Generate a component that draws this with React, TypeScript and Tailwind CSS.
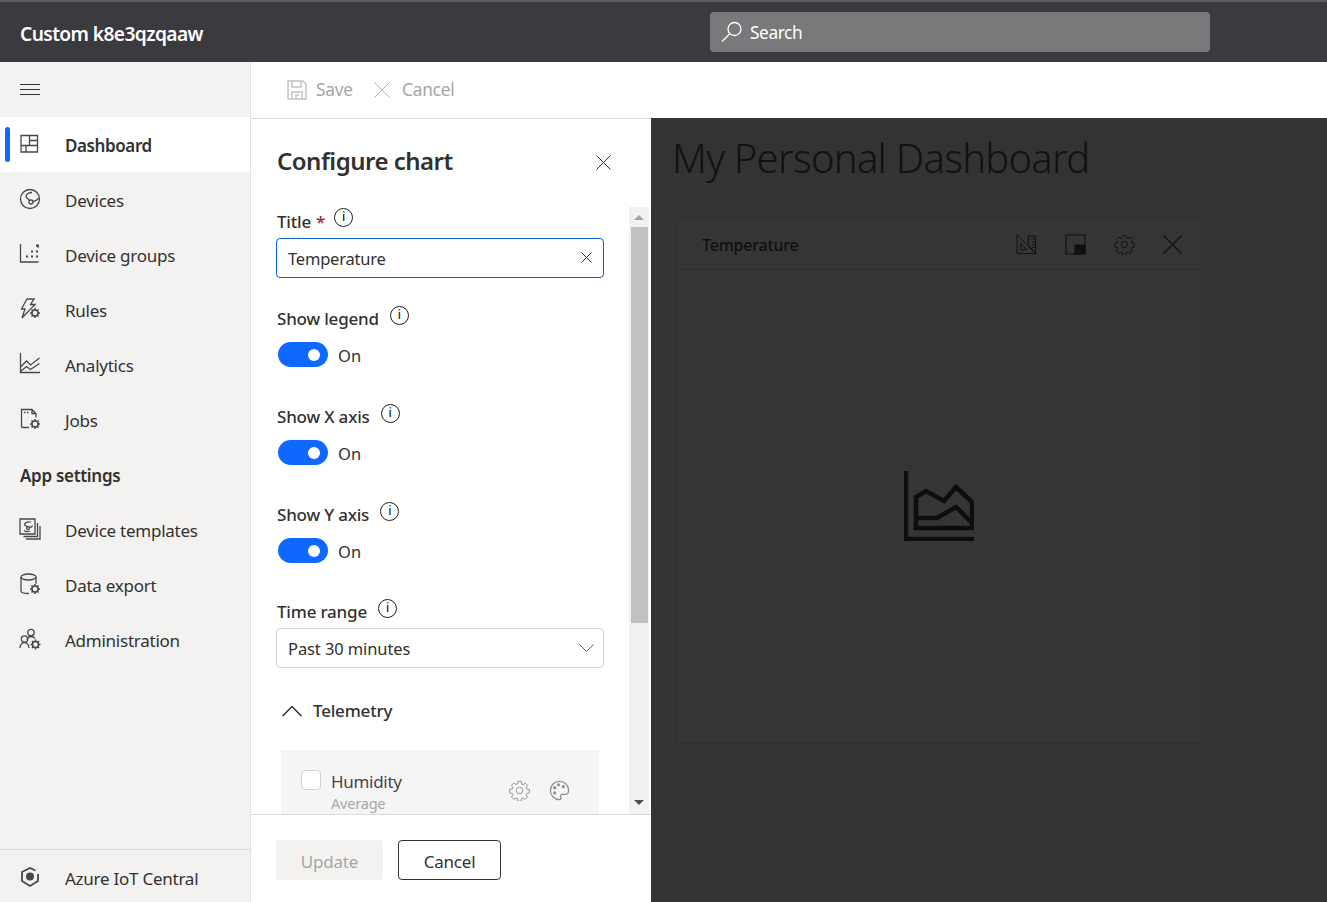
import type { ReactNode } from 'react';

const font = { fontFamily: '"Noto Sans", "Open Sans", sans-serif' };

function Icon({ size = 22, children, className = '' }: { size?: number; children: ReactNode; className?: string }) {
  return (
    <svg
      width={size}
      height={size}
      viewBox="0 0 22 22"
      fill="none"
      stroke="currentColor"
      strokeWidth="1.300"
      className={`shrink-0 ${className}`}
    >
      {children}
    </svg>
  );
}

function Cross({ size, width = 1, className = '' }: { size: number; width?: number; className?: string }) {
  return (
    <svg width={size} height={size} viewBox={`0 0 ${size} ${size}`} stroke="currentColor" strokeWidth={width} className={`shrink-0 ${className}`}>
      <path d={`M.5 .5 ${size - 0.5} ${size - 0.5}M${size - 0.5} .5 .5 ${size - 0.5}`} />
    </svg>
  );
}

// little gear that sits on the corner of the nav icons
function SmallGear({ cx, cy }: { cx: number; cy: number }) {
  return (
    <g>
      <circle cx={cx} cy={cy} r="5.500" fill="#f3f2f1" stroke="none" />
      <circle cx={cx} cy={cy} r="3" strokeWidth="1.500" />
      <path
        d={`M${cx} ${cy - 5}v2M${cx} ${cy + 3}v2M${cx - 5} ${cy}h2M${cx + 3} ${cy}h2M${cx - 3.500} ${cy - 3.500}l1.400 1.400M${cx + 2.100} ${cy + 2.100}l1.400 1.400M${cx + 3.500} ${cy - 3.500}l-1.400 1.400M${cx - 2.100} ${cy + 2.100}l-1.400 1.400`}
        strokeWidth="1.600"
      />
    </g>
  );
}

function Gear({ size = 22, className = '' }: { size?: number; className?: string }) {
  return (
    <Icon size={size} className={className}>
      <g strokeWidth="1">
        <path d="M9.300 1.500h3.400l.5 2.700 1.500.7 2.300-1.500 2.400 2.400-1.500 2.300.7 1.500 2.700.5v3.400l-2.700.5-.7 1.500 1.500 2.300-2.400 2.400-2.300-1.500-1.500.7-.5 2.700H9.300l-.5-2.700-1.500-.7-2.300 1.500-2.400-2.400 1.500-2.300-.7-1.500-2.700-.5V9.900l2.700-.5.7-1.500L2.600 5.600 5 3.200l2.300 1.500 1.500-.7z" />
        <circle cx="11" cy="11" r="3.400" />
      </g>
    </Icon>
  );
}

const icons: Record<string, ReactNode> = {
  Dashboard: <path d="M2 2.500h16.500v16.500H2zM10.500 2.500v10M2 12.500h16.500M10.500 7.500h8M7 12.500V19" />,
  Devices: (
    <>
      <circle cx="11" cy="11" r="9.500" />
      <circle cx="12" cy="14" r="2" />
      <path d="M10.500 12.500 7 9c0-3 3-4.500 6-4.500M14 13.500c2 0 4-1 5.500-3.500" />
    </>
  ),
  'Device groups': (
    <>
      <path d="M1.500 1v18h18" />
      <path d="M17 2.500h2v2M12 8.500h2M17 8.500h2M7 13.500h2M12 13.500h2M17 13.500h2" strokeWidth="2" />
    </>
  ),
  Rules: (
    <>
      <path d="M8 1h7l-3.500 5.500H16L3 20l3-9H2.500z" />
      <SmallGear cx={16} cy={15} />
    </>
  ),
  Analytics: <path d="M1.500 0v19.500H21M1.500 14l6-6 4 4 9-7M1.500 18.500l6-5 4 3 9-6" />,
  Jobs: (
    <>
      <path d="M2.500 19.500V1.500H13l4 4v4M2.500 19.500H10M13 1.500v4h4M5 4.500h1.500M8 4.500h1.500" />
      <SmallGear cx={16} cy={16} />
    </>
  ),
  'Device templates': (
    <>
      <path d="M1 1h15v15H1zM18.500 5v13.500h-14M21 8v13H7" />
      <circle cx="9" cy="10" r="1.500" />
      <path d="M8 8.500 5.500 7c0-2 2-3.500 6-3M10.500 9.500c1.500 0 2.500-.5 3-2M5 12.500c2 1.500 4 1.500 6 .5" />
    </>
  ),
  'Data export': (
    <>
      <ellipse cx="9.500" cy="4" rx="7.500" ry="3" />
      <path d="M2 4v14c0 1.500 3 2.500 8 2.500M17 4v7" />
      <SmallGear cx={16} cy={16} />
    </>
  ),
  Administration: (
    <>
      <circle cx="12" cy="4.500" r="3.200" />
      <path d="M8 12c.5-2 2-3.500 4-3.500s3 .5 4 2" />
      <circle cx="5.500" cy="11" r="3.200" />
      <path d="M1 20c0-3 2-5.500 4.500-5.500S10 17 10 20" />
      <SmallGear cx={16.500} cy={16.500} />
    </>
  ),
  'Azure IoT Central': (
    <>
      <path d="M16.500 4.500 11 2 3 6v9l8 5 8-5V8" strokeWidth="1.800" />
      <circle cx="11" cy="10.500" r="4" fill="currentColor" stroke="none" />
    </>
  ),
};

function NavRow({ label, active = false }: { label: string; active?: boolean }) {
  return (
    <div className={`relative flex h-[55px] items-center pl-[19px] ${active ? 'bg-white' : ''}`}>
      {active && <div className="absolute left-[5px] top-[10px] h-[35px] w-[5px] rounded-full bg-[#0f68ff]" />}
      <Icon className="-mt-[2px] text-[#484848]">{icons[label]}</Icon>
      <span className={`ml-[24px] mt-[2px] text-[17px] text-[#323130] ${active ? 'font-semibold tracking-[-0.4px]' : 'tracking-[-0.25px]'}`}>{label}</span>
    </div>
  );
}

function Info({ raised = false }: { raised?: boolean }) {
  return (
    <span
      className={`flex h-[19px] w-[19px] items-center justify-center rounded-full border border-[#201f1e] pb-px text-[12px] leading-none text-[#201f1e] ${
        raised ? 'ml-[9px] -mt-[9px]' : 'ml-[11px] -mt-[7px]'
      }`}
    >
      i
    </span>
  );
}

function Toggle() {
  return (
    <div className="mt-[10px] flex h-[25px] items-center">
      <div className="ml-[2px] flex h-[25px] w-[50px] items-center justify-end rounded-full bg-[#0f68ff] pr-[8px]">
        <div className="h-[12px] w-[12px] rounded-full bg-white" />
      </div>
      <span className="ml-[10px] h-[25px] text-[16.500px] leading-[28px] text-[#323130]">On</span>
    </div>
  );
}

function FieldLabel({ children }: { children: ReactNode }) {
  return (
    <div className="flex h-[27px] items-center pl-px text-[17px] font-medium tracking-[-0.2px] text-[#323130]">
      {children}
      <Info />
    </div>
  );
}

export default function App() {
  return (
    <div style={font} className="flex h-[902px] w-[1327px] flex-col overflow-hidden bg-white">
      <header className="flex h-[62px] shrink-0 items-center border-t-2 border-[#5c5c5c] bg-[#3b3a3f]">
        <div className="mt-[4px] w-[710px] pl-5 text-[19.200px] font-semibold tracking-[-0.6px] text-white">Custom k8e3qzqaaw</div>
        <div className="flex h-10 w-[500px] items-center rounded-sm bg-[#79797b] pl-[11px] text-white">
          <svg width="22" height="22" viewBox="0 0 22 22" fill="none" stroke="currentColor" strokeWidth="1.300">
            <circle cx="13.500" cy="8" r="6.500" />
            <path d="M8.800 12.700 1 20.500" />
          </svg>
          <span className="ml-[7px] mt-[2px] text-[17.300px] tracking-[-0.4px]">Search</span>
        </div>
      </header>

      <div className="flex min-h-0 flex-1">
        <aside className="flex w-[251px] shrink-0 flex-col border-r border-[#e3e2e1] bg-[#f3f2f1]">
          <div className="flex h-[55px] items-center pl-5">
            <svg width="20" height="12" viewBox="0 0 20 12" stroke="#323130" strokeWidth="1">
              <path d="M0 .5h20M0 5.500h20M0 10.500h20" />
            </svg>
          </div>
          <NavRow label="Dashboard" active />
          <NavRow label="Devices" />
          <NavRow label="Device groups" />
          <NavRow label="Rules" />
          <NavRow label="Analytics" />
          <NavRow label="Jobs" />
          <div className="flex h-[55px] items-center pl-5 pt-[2px] text-[17px] font-semibold tracking-[-0.3px] text-[#323130]">App settings</div>
          <NavRow label="Device templates" />
          <NavRow label="Data export" />
          <NavRow label="Administration" />
          <div className="mt-auto h-[53px] border-t border-[#dcdbda]">
            <div className="flex h-[52px] items-center pl-[19px] pt-[3px]">
              <Icon className="-mt-[2px] text-[#484848]">{icons['Azure IoT Central']}</Icon>
              <span className="ml-[24px] mt-[2px] text-[17px] tracking-[-0.25px] text-[#323130]">Azure IoT Central</span>
            </div>
          </div>
        </aside>

        <div className="flex min-w-0 flex-1 flex-col">
          <div className="flex h-[56px] shrink-0 items-center pl-[36px] text-[17.300px] tracking-[-0.2px] text-[#a6a6a6]">
            <svg width="20" height="20" viewBox="0 0 20 20" fill="none" stroke="#c4c4c4" strokeWidth="1.500">
              <path d="M1 1h15l3 3v15H1zM5 1v6h9V1M5 19v-7h10v7M9 19v-4h3" />
            </svg>
            <span className="ml-[9px]">Save</span>
            <Cross size={16} className="ml-[21px] text-[#b0b0b0]" />
            <span className="ml-[12px]">Cancel</span>
          </div>

          <div className="flex min-h-0 flex-1">
            <section className="flex w-[400px] shrink-0 flex-col border-t border-[#dcdbda] bg-white">
              <div className="flex h-[88px] shrink-0 items-start justify-between pl-[26px] pr-[40px] pt-[23px]">
                <h2 className="text-[24px] font-semibold leading-[38px] tracking-[-0.5px] text-[#323130]">Configure chart</h2>
                <Cross size={15} className="mt-[13px] text-[#323130]" />
              </div>

              <div className="flex min-h-0 flex-1 pr-[2px]">
                <div className="min-w-0 flex-1 overflow-hidden pl-[25px] pr-[25px]">
                  <div className="flex h-[31px] items-center pb-[2px] pl-px text-[17px] font-medium tracking-[-0.2px] text-[#323130]">
                    Title <span className="ml-[5px] text-[#a4262c]">*</span>
                    <Info raised />
                  </div>
                  <div className="flex h-10 items-center justify-between rounded-sm border border-[#0a66d6] pl-[11px] pr-[11px] text-[16.500px] tracking-[-0.2px] text-[#323130]">
                    <span className="mt-[2px]">Temperature</span>
                    <Cross size={11} className="-mt-[2px] text-[#323130]" />
                  </div>

                  <div className="mt-[27px]">
                    <FieldLabel>Show legend</FieldLabel>
                    <Toggle />
                  </div>
                  <div className="mt-[36px]">
                    <FieldLabel>Show X axis</FieldLabel>
                    <Toggle />
                  </div>
                  <div className="mt-[36px]">
                    <FieldLabel>Show Y axis</FieldLabel>
                    <Toggle />
                  </div>
                  <div className="mt-[35px]">
                    <FieldLabel>Time range</FieldLabel>
                    <div className="mt-[3px] flex h-10 items-center justify-between rounded-sm border border-[#d2d0ce] pl-[11px] pr-[9px] text-[16.500px] tracking-[-0.1px] text-[#323130]">
                      <span className="mt-[2px]">Past 30 minutes</span>
                      <svg width="15" height="9" viewBox="0 0 15 9" fill="none" stroke="#605e5c" strokeWidth="1">
                        <path d="M.5 .5l7 7 7-7" />
                      </svg>
                    </div>
                  </div>

                  <div className="mt-[30px] flex h-[28px] items-center text-[17px] font-medium tracking-[-0.2px] text-[#323130]">
                    <svg width="20" height="12" viewBox="0 0 20 12" fill="none" stroke="#323130" strokeWidth="1.500" className="ml-[6px] -mt-[2px]">
                      <path d="M.7 11 10 1.500l9.300 9.500" />
                    </svg>
                    <span className="ml-[11px] -mt-[2px]">Telemetry</span>
                  </div>

                  <div className="ml-[5px] mt-[24px] flex h-[90px] w-[318px] items-start bg-[#f5f5f5] pl-[20px] pt-[20px]">
                    <div className="h-[20px] w-[20px] rounded-sm border border-[#d2d0ce] bg-white" />
                    <div className="ml-[10px] flex w-[178px] flex-col">
                      <span className="text-[17px] leading-[24px] tracking-[-0.3px] text-[#484644]">Humidity</span>
                      <span className="text-[14.500px] leading-[19px] tracking-[-0.2px] text-[#a8a8a8]">Average</span>
                    </div>
                    <Gear size={21} className="mt-[10px] text-[#8f8f8f]" />
                    <Icon size={21} className="ml-[19px] mt-[10px] text-[#8f8f8f]">
                      <path d="M11 1.500C5.500 1.500 1.500 5.500 1.500 11s4 9.500 9.500 9.500c1.800 0 2-1.500 1.300-2.600-.8-1.300 0-2.900 1.700-2.900h3c2 0 3.500-1.500 3.500-4 0-5.500-4-9.500-9.500-9.500z" />
                      <circle cx="6" cy="8" r="1" fill="currentColor" />
                      <circle cx="10" cy="5" r="1" fill="currentColor" />
                      <circle cx="15" cy="7" r="1" fill="currentColor" />
                      <circle cx="6" cy="13.500" r="1" fill="currentColor" />
                    </Icon>
                  </div>
                </div>

                <div className="flex w-[20px] shrink-0 flex-col items-center bg-[#f1f1f1]">
                  <div className="flex h-[20px] items-center justify-center">
                    <div className="h-0 w-0 border-x-[5px] border-b-[5px] border-x-transparent border-b-[#a3a3a3]" />
                  </div>
                  <div className="h-[396px] w-[17px] bg-[#c1c1c1]" />
                  <div className="mt-auto flex h-[20px] items-center justify-center pb-[3px]">
                    <div className="h-0 w-0 border-x-[5px] border-t-[5px] border-x-transparent border-t-[#505050]" />
                  </div>
                </div>
              </div>

              <div className="flex h-[88px] shrink-0 items-start border-t border-[#dcdbda] pl-[25px] pt-[25px]">
                <div className="flex h-10 w-[107px] items-center justify-center rounded-sm bg-[#f3f2f1] pt-[3px] text-[17px] tracking-[-0.2px] text-[#a6a6a6]">Update</div>
                <div className="ml-[15px] flex h-10 w-[103px] items-center justify-center rounded-sm border border-[#323130] pt-[3px] text-[17px] tracking-[-0.2px] text-[#323130]">Cancel</div>
              </div>
            </section>

            <main className="min-w-0 flex-1 bg-[#333333] pl-[21px]">
              <h1 className="mt-[12px] text-[40px] font-light leading-[56px] tracking-[-0.75px] text-[#111111]">My Personal Dashboard</h1>
              <div className="ml-[5px] mt-[33px] flex h-[524px] w-[524px] flex-col bg-[#353535] shadow-[0_0_2px_rgba(0,0,0,0.2)]">
                <div className="flex h-[51px] shrink-0 items-center border-b border-[#2e2e2e] pl-[25px] pr-[19px] text-[#101010]">
                  <span className="mt-[1px] text-[16px] font-medium tracking-[-0.2px]">Temperature</span>
                  <div className="ml-auto flex items-center gap-[28px]">
                    <Icon size={21}>
                      <g strokeWidth="1">
                        <path d="M1 1v19.500h19.500zM20.500 2H13v9l7.500 9.500zM16 5h4.500M17 8h3.500M17 11h3.500M17 14h3.500M5 16.500h6l-6-7z" />
                      </g>
                    </Icon>
                    <svg width="21" height="21" viewBox="0 0 21 21" fill="none" stroke="currentColor" strokeWidth="1.100">
                      <path d="M1 1h19v19H1z" />
                      <path d="M10 11h10v9H10z" fill="currentColor" />
                    </svg>
                    <Gear size={21} />
                    <Cross size={19} width={1.300} />
                  </div>
                </div>
                <div className="flex flex-1 items-center justify-center text-[#0d0d0d]">
                  <svg width="70" height="70" viewBox="0 0 70 70" fill="none" stroke="currentColor" strokeWidth="4.500" className="mt-[-2px]">
                    <path d="M2 0v68h68" />
                    <path d="M12 57V26l10-6 18 10 12-14 16 15v26zM12 47h21l19-11 16 16" />
                  </svg>
                </div>
              </div>
            </main>
          </div>
        </div>
      </div>
    </div>
  );
}
